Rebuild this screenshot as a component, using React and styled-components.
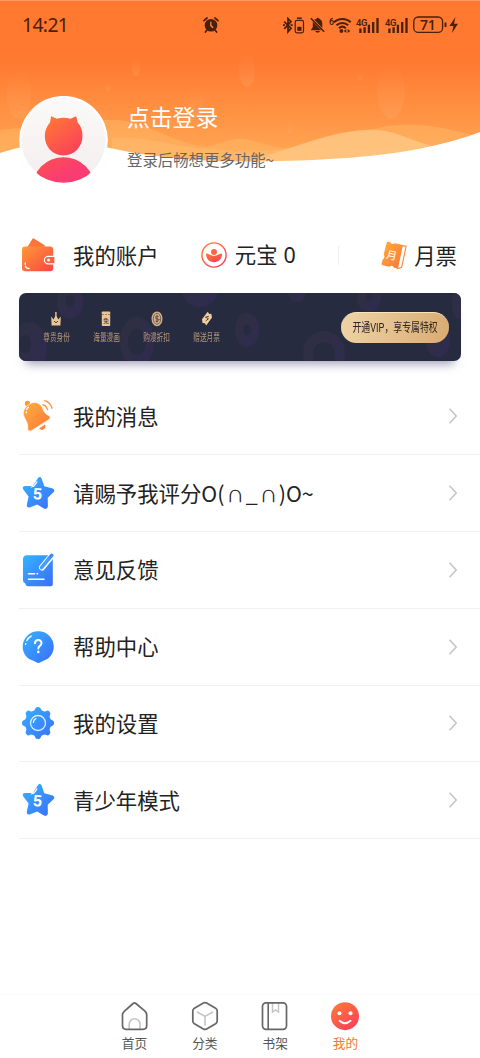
import styled, { createGlobalStyle } from "styled-components";

const GlobalStyle = createGlobalStyle`
  * {
    box-sizing: border-box;
  }
  body {
    margin: 0;
    background: #fff;
    font-family: "Noto Sans CJK SC", sans-serif;
    color: #222;
  }
`;

/* shared gradients, referenced by id from every icon */
function Gradients() {
  return (
    <HiddenSvg width="0" height="0">
      <defs>
        <linearGradient id="blue" x1="0" y1="0" x2="1" y2="1">
          <stop offset="0" stopColor="#35b4fd" />
          <stop offset="1" stopColor="#3b6dfb" />
        </linearGradient>
        <linearGradient id="orange" x1="0" y1="0" x2="1" y2="1">
          <stop offset="0" stopColor="#ffae3f" />
          <stop offset="1" stopColor="#fd7638" />
        </linearGradient>
        <linearGradient id="red" x1="0.1" y1="0" x2="0.8" y2="1">
          <stop offset="0" stopColor="#ff7a35" />
          <stop offset="1" stopColor="#fb3e5c" />
        </linearGradient>
        <linearGradient id="wallet" x1="0" y1="0" x2="1" y2="1">
          <stop offset="0" stopColor="#ff9a35" />
          <stop offset="1" stopColor="#fb4345" />
        </linearGradient>
      </defs>
    </HiddenSvg>
  );
}

function HeaderArt() {
  return (
    <HeaderSvg width="480" height="190" viewBox="0 0 480 190">
      <defs>
        <linearGradient id="sky" x1="0" y1="0" x2="0" y2="1">
          <stop offset="0" stopColor="#ff7830" />
          <stop offset="0.38" stopColor="#ff7a31" />
          <stop offset="1" stopColor="#ffab57" />
        </linearGradient>
        <linearGradient id="drop" x1="0" y1="0" x2="0" y2="1">
          <stop offset="0" stopColor="#ffb070" stopOpacity="0" />
          <stop offset="1" stopColor="#ffb070" stopOpacity="0.24" />
        </linearGradient>
      </defs>
      <rect width="480" height="165" fill="url(#sky)" />
      <rect width="480" height="1" fill="#ff9a62" />
      <g fill="url(#drop)">
        <ellipse cx="19" cy="94" rx="12" ry="25" />
        <ellipse cx="136" cy="68" rx="4" ry="8" />
        <ellipse cx="108" cy="87" rx="2.5" ry="4" />
        <ellipse cx="247" cy="70" rx="8" ry="17" />
        <ellipse cx="360" cy="77" rx="2.3" ry="4" />
        <ellipse cx="391" cy="91" rx="13.5" ry="28" />
        <ellipse cx="290" cy="127" rx="3" ry="7" />
        <ellipse cx="196" cy="103" rx="8" ry="15" />
      </g>
      <path
        d="M0 130C30 127 80 119 118 120C150 123 170 142 206 147C218 145 228 139 240 138.5C256 139 270 149 288 148C320 143 340 130 372 129.5C390 124 410 124 430 126C450 129 462 133 475 136V170H0Z"
        fill="#ffb765"
        opacity="0.5"
      />
      <path
        d="M258 158C300 146 330 131 368 130C392 128 410 141 436 147V170H258Z"
        fill="#ffc988"
        opacity="0.75"
      />
      <path
        d="M112 138C150 136 175 148 210 149C240 152 262 152 290 149V170H112Z"
        fill="#ffc47c"
        opacity="0.35"
      />
      <path
        d="M0 153C35 141 72 139 110 148C180 164 250 162 300 160.5C370 158 430 151 480 132V190H0Z"
        fill="#fff"
      />
    </HeaderSvg>
  );
}

function AlarmIcon() {
  return (
    <svg width="16" height="16" viewBox="0 0 16 16">
      <circle cx="8" cy="8.3" r="6.3" fill="#49200c" />
      <path
        d="M1 3.6 4 1M15 3.6 12 1M4 13 2.4 15M12 13l1.6 2"
        stroke="#49200c"
        strokeWidth="1.7"
        strokeLinecap="round"
      />
      <path d="M7.8 4.8v3.8l2.4 2.2" stroke="#ff8b4c" strokeWidth="1.3" fill="none" />
    </svg>
  );
}

function BluetoothIcon() {
  return (
    <svg width="23" height="17" viewBox="0 0 23 17" fill="none" stroke="#49200c">
      <path d="M1.2 4.7 8 11.3 5 14.8V1.5l3 3.2L1.2 11.8" strokeWidth="1.7" />
      <path d="M0 8.2h2M7.5 8.2h2.2" strokeWidth="1.8" />
      <rect x="12.2" y="3.4" width="8.3" height="12.4" rx="1.8" strokeWidth="1.2" />
      <path d="M14 1.2h4.8" strokeWidth="1.5" />
      <path d="M14.3 11.8h4.2" strokeWidth="4" />
    </svg>
  );
}

function BellOffIcon() {
  return (
    <svg width="15" height="16" viewBox="0 0 15 16" fill="#49200c">
      <path d="M4.3 2.6C5.8 1.9 6.9 1.9 7.2.8h1.2C8.7 1.9 12.3 2.3 12.3 6.4v4.6ZM2.8 4.7 11.3 13.2H.9c.3-1.3 1.9-1.5 1.9-3.6Z" />
      <path d="M5.3 14h4.6c-.5 2-4.1 2-4.6 0Z" />
      <path d="M.8 1.3 14.2 14.7" stroke="#49200c" strokeWidth="1.6" />
    </svg>
  );
}

function WifiIcon() {
  return (
    <svg width="23" height="17" viewBox="0 0 23 17">
      <TinyText x="0" y="8.3" fontSize="8.8">6</TinyText>
      <g fill="none" stroke="#49200c" strokeWidth="2">
        <path d="M5 5.3C9.5.8 17.2.8 21.7 5.3" />
        <path d="M7.5 8.3c3.3-3.2 8.4-3.2 11.7 0" />
        <path d="M10 11.2c2-1.8 4.8-1.8 6.7 0" />
      </g>
      <circle cx="12.4" cy="14" r="1.9" fill="#49200c" />
      <path d="M14.8 14l2.5-2v4ZM21.2 14l-2.5-2v4Z" fill="#49200c" />
    </svg>
  );
}

function SignalIcon() {
  return (
    <svg width="24.5" height="17" viewBox="0 0 24.5 17">
      <TinyText x="0" y="9" fontSize="9.4">4G</TinyText>
      <path
        d="M4.4 11.5v4.5M8.6 10.2v5.8M12.9 7.8v8.2M17.2 5v11M21.5 1v15"
        stroke="#49200c"
        strokeWidth="2.3"
      />
    </svg>
  );
}

function BatteryIcon() {
  return (
    <svg width="46" height="18" viewBox="0 0 46 18">
      <rect x=".8" y="1" width="28.8" height="15.4" rx="4.5" fill="none" stroke="#49200c" strokeWidth="1.3" />
      <path d="M32.5 6.5v4.5" stroke="#49200c" strokeWidth="1.9" />
      <BatteryText x="7" y="13.6">71</BatteryText>
      <path d="M42.5 1 36.4 10h4l-1.4 7 6-9.3h-4Z" fill="#49200c" />
    </svg>
  );
}

function Avatar() {
  return (
    <svg width="90" height="88" viewBox="0 0 90 88">
      <defs>
        <linearGradient id="face" x1="0" y1="0" x2="0" y2="1">
          <stop offset="0" stopColor="#fbf9f9" />
          <stop offset="1" stopColor="#f4eeed" />
        </linearGradient>
        <linearGradient id="body" x1="0" y1="0" x2=".5" y2="1">
          <stop offset="0" stopColor="#ff5349" />
          <stop offset=".45" stopColor="#f93c72" />
        </linearGradient>
        <clipPath id="round">
          <circle cx="44.5" cy="44" r="42.7" />
        </clipPath>
      </defs>
      <circle cx="44.5" cy="44.2" r="44.3" fill="#fff" />
      <circle cx="44.5" cy="44" r="42.2" fill="url(#face)" />
      <path
        d="M32 20.8C32 20.2 32.7 20.2 33.3 20.7L38 22.8Q44.5 20.5 51.5 22.8L56.5 20.5C57.2 20.2 57.4 20.7 57.5 21.3L58.7 26.5C62 30 63.5 34.5 63.5 40C63.5 51 55 59.5 44.5 59.5S25.8 51 25.8 40C25.8 34.5 28 30 31 26.5Z"
        fill="url(#red)"
      />
      <circle cx="44.5" cy="92.5" r="31.3" fill="url(#body)" clipPath="url(#round)" />
    </svg>
  );
}

function WalletIcon() {
  return (
    <svg width="34" height="34" viewBox="0 0 34 34">
      <path d="M5.5 9 10.5.8Q11.2 0 12.2.7L22.7 7.2V9Z" fill="#fd7438" />
      <rect x="0" y="8.5" width="31.2" height="24.8" rx="3.2" fill="url(#wallet)" />
      <path
        d="M33 18.3h-6.8a3.8 3.8 0 0 0 0 7.6H33Z"
        fill="#fc6042"
        stroke="#fff"
        strokeWidth="1.2"
      />
      <circle cx="26.5" cy="22.1" r="1.5" fill="#fff" />
      <path d="M3.2 25v1.3M3.4 28.2c.5 1.5 1.6 2.3 3.7 2.3" stroke="#fff" strokeWidth="1.3" fill="none" strokeLinecap="round" />
    </svg>
  );
}

function CoinIcon() {
  return (
    <svg width="26" height="26" viewBox="0 0 26 26">
      <circle cx="13" cy="13" r="12.1" fill="none" stroke="url(#red)" strokeWidth="1.4" />
      <circle cx="13" cy="10" r="3" fill="#fd6545" />
      <path
        d="M5 11.5c3.5-.2 4.7 2.5 8 2.5s4.5-2.7 8-2.5c.3 5.2-3.3 8.8-8 8.8s-8.3-3.6-8-8.8Z"
        fill="url(#red)"
      />
    </svg>
  );
}

function TicketIcon() {
  return (
    <svg width="26" height="29" viewBox="0 0 26 29">
      <path d="M20.5 4.6l4.6.7-4.5 21.3-4.8 1" fill="#fff" stroke="#ff8437" strokeWidth="1.1" />
      <path
        d="M5.5 2.2Q6 .5 7.7.8L9.5 1.2Q11 4.2 14 2.3L20.8 3.8Q22 4 21.7 5.2L17.3 26.2Q17 27.5 15.5 27.2L13 26.7Q11.5 23.5 8.5 25.7L1.5 24.2Q.3 24 .6 22.6L1.7 18.5Q4.5 16.5 2.7 13.5Z"
        fill="url(#orange)"
      />
      <text x="5.6" y="18.2" fontSize="10.5" fill="#fff" transform="rotate(12 11 14)">月</text>
    </svg>
  );
}

function BellIcon() {
  return (
    <svg width="34" height="34" viewBox="0 0 34 34">
      <circle cx="6.5" cy="4.5" r="2.7" fill="#ff9a3b" />
      <path d="M18 29.5 24 25.5c2 3.2-2.5 7.5-6 4Z" fill="#fd8438" />
      <path
        d="M9.2 4.7C14 1.8 19.5 4.3 21.6 9.2C22.9 12.7 24.5 15 27.5 16.6C29.6 17.8 29.4 19.3 27.9 20.6L10.8 31.4C8.3 32.7 6.6 31.7 6.8 29.4C7.2 24.5 5 22 3 17.5C1 12.7 3.7 7.5 9.2 4.7Z"
        fill="url(#orange)"
        stroke="#fff"
        strokeWidth=".6"
      />
      <path d="M22 5.6q3 .9 4.6 5M23.7 1.6q5.5 1.3 7.3 7.6" stroke="#ff9440" strokeWidth="1.4" fill="none" strokeLinecap="round" />
      <path d="M5.3 13.8v-1M5.7 10.5q.6-1.5 1.7-2.2" stroke="#fff" strokeWidth="1.3" fill="none" strokeLinecap="round" />
    </svg>
  );
}

function StarIcon() {
  return (
    <svg width="34" height="34" viewBox="0 0 34 34">
      <path
        d="M17 1.9Q19 -.3 20.5 2.3L23.3 10.3L31.7 12.5Q34.8 14 32.2 16.5L26.7 21.8L26.9 30.2Q26.3 33.9 23 32.5L16.2 28.5L8.7 31.5Q5.5 32.1 5.8 28.7L7.6 20.6L2.3 13.5Q.6 10.4 4 10.1L12 9.9Z"
        fill="url(#blue)"
      />
      <path d="M10.2 11q3-.2 4-2.4l1.7-2.8" stroke="#fff" strokeWidth="1.2" fill="none" strokeLinecap="round" />
      <IconText x="12.3" y="23.3" fontSize="16" transform="rotate(4 16 17)">5</IconText>
    </svg>
  );
}

function FeedbackIcon() {
  return (
    <svg width="34" height="34" viewBox="0 0 34 34">
      <path
        d="M6 2.3H30Q31.8 2.3 31.8 4.1V31.4Q31.8 33.2 30 33.2H6.7Q4.7 33 4.2 30.5Q2 30 2 27.3V6.3Q2 2.3 6 2.3Z"
        fill="url(#blue)"
      />
      <path d="M30.5 3 21 14.5" stroke="#fff" strokeWidth="6" strokeLinecap="round" />
      <path d="M30.7 2.3 27.5 6.2" stroke="#3f8afb" strokeWidth="3.6" strokeLinecap="round" />
      <path d="M27.5 6.2 20.5 14.7" stroke="#479dfc" strokeWidth="3.6" strokeLinecap="round" />
      <path d="M7.5 20.7h6M16 20.7h.6M7.5 26.2H23" stroke="#fff" strokeWidth="1.5" strokeLinecap="round" />
    </svg>
  );
}

function HelpIcon() {
  return (
    <svg width="34" height="34" viewBox="0 0 34 34">
      <path
        d="M17.2 1.3A15.3 15.3 0 0 1 32.7 16.7C32.7 23.5 28.7 28.5 22.5 30.8L18.4 32.7Q17.4 33.1 16.4 32.7L12.2 30.8C5.7 28.5 1.7 23.5 1.7 16.7A15.4 15.4 0 0 1 17.2 1.3Z"
        fill="url(#blue)"
      />
      <path d="M4.6 14.4l.1-.6M5.9 10.5q1.3-2.8 4.2-4.4" stroke="#fff" strokeWidth="1.4" fill="none" strokeLinecap="round" />
      <path
        d="M14 13.3c.2-4.3 6.7-4.2 6.5-.1-.2 2.8-3.2 2.6-3.2 5.4"
        stroke="#fff"
        strokeWidth="2"
        fill="none"
        strokeLinecap="round"
      />
      <circle cx="17.3" cy="21.9" r="1.3" fill="#fff" />
    </svg>
  );
}

function SettingsIcon() {
  const teeth = [0, 45, 90, 135, 180, 225, 270, 315];
  return (
    <svg width="34" height="34" viewBox="0 0 34 34">
      <mask id="gear">
        <circle cx="17" cy="17" r="13" fill="#fff" />
        {teeth.map((angle) => (
          <path
            key={angle}
            d="M11.5 6Q13.8 4.8 14.3 2.6 14.7.9 17 .9T19.7 2.6Q20.2 4.8 22.5 6Z"
            fill="#fff"
            transform={`rotate(${angle} 17 17)`}
          />
        ))}
      </mask>
      <rect width="34" height="34" fill="url(#blue)" mask="url(#gear)" />
      <circle cx="17" cy="17" r="7.5" fill="none" stroke="#d5edff" strokeWidth="1.3" />
      <path d="M12.3 16.5q.3-2.6 2.6-3.9" stroke="#fff" strokeWidth="1.2" fill="none" strokeLinecap="round" />
    </svg>
  );
}

function Chevron() {
  return (
    <svg width="10" height="18" viewBox="0 0 10 18" fill="none">
      <path d="M1.5 1.7 8.2 9 1.5 16.3" stroke="#c6c6c6" strokeWidth="1.6" />
    </svg>
  );
}

function CardArt() {
  return (
    <CardSvg width="442" height="68" viewBox="0 0 442 68">
      <defs>
        <linearGradient id="ring" x1="0" y1="0" x2="1" y2="1">
          <stop offset="0" stopColor="#2e303e" />
          <stop offset="1" stopColor="#302a52" />
        </linearGradient>
      </defs>
      <g fill="url(#ring)">
        <ellipse cx="51" cy="8" rx="13" ry="18" />
        <ellipse cx="10" cy="54" rx="18" ry="25" />
        <ellipse cx="118" cy="49" rx="17" ry="25" />
        <ellipse cx="181" cy="-4" rx="18" ry="18" />
        <ellipse cx="228" cy="37" rx="12" ry="17" />
        <ellipse cx="278" cy="-3" rx="9" ry="12" />
        <ellipse cx="350" cy="4" rx="12" ry="15" />
        <ellipse cx="305" cy="60" rx="21" ry="22" />
        <ellipse cx="419" cy="48" rx="12" ry="16" />
        <ellipse cx="440" cy="10" rx="7" ry="16" />
      </g>
      <g fill="#272b3f">
        <ellipse cx="51" cy="8" rx="4.5" ry="6" />
        <ellipse cx="6" cy="51" rx="6" ry="9" />
        <ellipse cx="118" cy="49" rx="9" ry="13" />
        <ellipse cx="228" cy="37" rx="3.5" ry="5" />
        <ellipse cx="350" cy="3" rx="3.5" ry="5" />
        <ellipse cx="305" cy="62" rx="11" ry="13" />
      </g>
    </CardSvg>
  );
}

function CrownIcon() {
  return (
    <svg width="12" height="16" viewBox="0 0 12 16">
      <path d="M1.2 5.5 3.6 8.5 5.2 5V1h1.4V5L8.3 8.5 10.8 5.5 10.4 14.5H1.6Z" fill="#eac596" />
      <path d="M4 10.2q2 3 4 0" stroke="#4c4144" fill="none" />
    </svg>
  );
}

function ComicIcon() {
  return (
    <svg width="10" height="16" viewBox="0 0 10 16">
      <rect x=".8" y=".5" width="8.4" height="14.5" rx=".7" fill="#eac596" />
      <path d="M1.5 3.5h1M4.5 3.5h1M7.5 3.5h1" stroke="#4c4144" />
      <text x="2" y="11.8" fontSize="6" fontWeight="500" fill="#4c4144">免</text>
    </svg>
  );
}

function DiscountIcon() {
  return (
    <svg width="12" height="16" viewBox="0 0 12 16">
      <ellipse cx="6" cy="7.8" rx="5.5" ry="7.4" fill="#d6b189" />
      <ellipse cx="6" cy="7.8" rx="3.7" ry="5.5" fill="none" stroke="#574a48" strokeWidth=".8" />
      <path d="M7.5 5.5Q4.3 4.5 4.5 6.5T7.3 8.2 6 10.6L4.5 10M6 4v7.5" stroke="#574a48" fill="none" />
    </svg>
  );
}

function GiftIcon() {
  return (
    <svg width="12" height="16" viewBox="0 0 12 16">
      <path d="M6.7.7 8.3 3l2-.2L11 6.5 5.2 14.6 3.9 12.2 1.5 12 1 8.2Z" fill="#f1ce9c" />
      <path d="M7.8 5.3 4.5 6.2l3 1.5-2.8 2.3" stroke="#4c4144" fill="none" />
    </svg>
  );
}

function HomeIcon() {
  return (
    <svg width="28" height="30" viewBox="0 0 28 30" fill="none" strokeLinejoin="round">
      <path d="M8.2 28v-4.8a5.4 5.4 0 0 1 10.8 0V28" stroke="#c5c5c5" strokeWidth="1.6" />
      <path d="M3.5 10.2 12.1 2.5Q13.5 1.4 14.9 2.5L24 10.2Q25.7 12 25.7 14V24.5Q25.7 28.3 22 28.3H5.2Q1.5 28.3 1.5 24.5V14Q1.5 12 3.5 10.2Z" stroke="#666" strokeWidth="1.7" />
    </svg>
  );
}

function CategoryIcon() {
  return (
    <svg width="28" height="30" viewBox="0 0 28 30" fill="none" strokeLinejoin="round">
      <path d="M6.5 11.2 14 15.4 21.5 11.2M14 15.4V24" stroke="#c5c5c5" strokeWidth="1.6" strokeLinecap="round" />
      <path d="M12.4 2.1Q14 1.2 15.6 2.1L24.6 7.3Q26.2 8.3 26.2 10V20Q26.2 21.7 24.6 22.7L15.6 27.9Q14 28.8 12.4 27.9L3.4 22.7Q1.8 21.7 1.8 20V10Q1.8 8.3 3.4 7.3Z" stroke="#666" strokeWidth="1.7" />
    </svg>
  );
}

function ShelfIcon() {
  return (
    <svg width="28" height="30" viewBox="0 0 28 30" fill="none">
      <path d="M11.5 2v9l3-2 3 2V2" stroke="#c5c5c5" strokeWidth="1.5" />
      <rect x="1.5" y="1.8" width="24" height="26.5" rx="3.5" stroke="#666" strokeWidth="1.7" />
      <path d="M7.2 2v26" stroke="#666" strokeWidth="1.6" />
    </svg>
  );
}

function SmileIcon() {
  return (
    <svg width="30" height="30" viewBox="0 0 30 30">
      <circle cx="15" cy="15.2" r="14" fill="url(#red)" />
      <circle cx="9.5" cy="12.2" r="2" fill="#fff" />
      <circle cx="20.5" cy="12.2" r="2" fill="#fff" />
      <path d="M9.5 19.8q5.4 4.8 11 0" stroke="#fff" strokeWidth="1.9" fill="none" strokeLinecap="round" />
    </svg>
  );
}

function HappyFace() {
  return (
    <>
      O(<Cap>∩</Cap>_<Cap>∩</Cap>)O~
    </>
  );
}

const perks = [
  { label: "尊贵身份", icon: <CrownIcon /> },
  { label: "海量漫画", icon: <ComicIcon /> },
  { label: "购漫折扣", icon: <DiscountIcon /> },
  { label: "赠送月票", icon: <GiftIcon /> },
];

const menu = [
  { label: "我的消息", icon: <BellIcon /> },
  { label: "请赐予我评分", icon: <StarIcon />, suffix: <HappyFace /> },
  { label: "意见反馈", icon: <FeedbackIcon /> },
  { label: "帮助中心", icon: <HelpIcon /> },
  { label: "我的设置", icon: <SettingsIcon /> },
  { label: "青少年模式", icon: <StarIcon /> },
];

const tabs = [
  { label: "首页", icon: <HomeIcon /> },
  { label: "分类", icon: <CategoryIcon /> },
  { label: "书架", icon: <ShelfIcon /> },
  { label: "我的", icon: <SmileIcon />, active: true },
];

function App() {
  return (
    <Page>
      <GlobalStyle />
      <Gradients />
      <Header>
        <HeaderArt />
        <StatusBar>
          <Time>14:21</Time>
          <AlarmIcon />
          <StatusIcons>
            <BluetoothIcon />
            <BellOffIcon />
            <WifiIcon />
            <SignalIcon />
            <SignalIcon />
            <BatteryIcon />
          </StatusIcons>
        </StatusBar>
        <Profile>
          <Avatar />
          <ProfileText>
            <LoginTitle>点击登录</LoginTitle>
            <LoginHint>登录后畅想更多功能~</LoginHint>
          </ProfileText>
        </Profile>
      </Header>

      <AccountRow>
        <AccountItem $gap={17}>
          <WalletIcon />
          <AccountLabel>我的账户</AccountLabel>
        </AccountItem>
        <AccountItem $gap={8}>
          <CoinIcon />
          <AccountLabel>
            元宝 <Amount>0</Amount>
          </AccountLabel>
        </AccountItem>
        <Separator />
        <AccountItem $gap={7}>
          <TicketIcon />
          <AccountLabel>月票</AccountLabel>
        </AccountItem>
      </AccountRow>

      <VipCard>
        <CardArt />
        <Perks>
          {perks.map((perk) => (
            <Perk key={perk.label}>
              {perk.icon}
              <PerkLabel>{perk.label}</PerkLabel>
            </Perk>
          ))}
        </Perks>
        <VipButton>
          <VipButtonText>
            开通<Latin>VIP</Latin>，享专属特权
          </VipButtonText>
        </VipButton>
      </VipCard>

      <Menu>
        {menu.map((item) => (
          <MenuRow key={item.label}>
            {item.icon}
            <MenuLabel>
              {item.label}
              {item.suffix}
            </MenuLabel>
            <Chevron />
          </MenuRow>
        ))}
      </Menu>

      <TabBar>
        {tabs.map((tab) => (
          <Tab key={tab.label} $active={tab.active}>
            {tab.icon}
            <TabLabel>{tab.label}</TabLabel>
          </Tab>
        ))}
      </TabBar>
    </Page>
  );
}

const HiddenSvg = styled.svg`
  position: absolute;
`;

const Page = styled.div`
  width: 480px;
  height: 1058px;
  display: flex;
  flex-direction: column;
  overflow: hidden;
  svg {
    flex: none;
  }
`;

const Header = styled.header`
  position: relative;
  height: 217px;
`;

const HeaderSvg = styled.svg`
  position: absolute;
  top: 0;
  left: 0;
  z-index: -1;
`;

const StatusBar = styled.div`
  height: 50px;
  display: grid;
  grid-template-columns: 181px 80px 1fr;
  align-items: center;
  padding-left: 22px;
`;

const Time = styled.span`
  font-family: "Noto Sans", sans-serif;
  font-size: 19.3px;
  letter-spacing: -0.6px;
  line-height: 24px;
  color: #49200c;
`;

const StatusIcons = styled.div`
  display: flex;
  align-items: center;
  gap: 4px;
`;

const TinyText = styled.text`
  font-family: Roboto, sans-serif;
  font-weight: 600;
  letter-spacing: -0.4px;
  fill: #49200c;
`;

const BatteryText = styled.text`
  font-family: "Open Sans", sans-serif;
  font-size: 14px;
  font-weight: 600;
  letter-spacing: -0.3px;
  fill: #49200c;
`;

const IconText = styled.text`
  font-family: "Liberation Sans", sans-serif;
  font-weight: 700;
  fill: #fff;
`;

const Profile = styled.div`
  display: flex;
  gap: 18px;
  padding: 46px 0 0 19px;
`;

const ProfileText = styled.div`
  padding-top: 5px;
`;

const LoginTitle = styled.div`
  font-size: 22.8px;
  line-height: 32px;
  color: #fff;
`;

const LoginHint = styled.div`
  margin-top: 15px;
  font-size: 15.4px;
  line-height: 22px;
  color: #666;
`;

const AccountRow = styled.div`
  height: 76px;
  display: flex;
  align-items: center;
  justify-content: space-between;
  padding: 0 23px 0 22px;
`;

const AccountItem = styled.div`
  display: flex;
  align-items: center;
  gap: ${(props) => props.$gap}px;
`;

const AccountLabel = styled.span`
  padding-bottom: 1px;
  font-size: 21.4px;
  line-height: 30px;
`;

const Amount = styled.span`
  margin-left: 1px;
  font-family: "Noto Sans", sans-serif;
`;

const Separator = styled.div`
  width: 1px;
  height: 19px;
  background: #f0f0f0;
`;

const VipCard = styled.section`
  position: relative;
  width: 442px;
  height: 68px;
  margin-left: 19px;
  display: flex;
  align-items: center;
  justify-content: space-between;
  padding: 0 12px;
  border-radius: 7px;
  background: #272b3f;
  box-shadow: 0 10px 9px -7px rgba(70, 66, 120, 0.5);
`;

const CardSvg = styled.svg`
  position: absolute;
  top: 0;
  left: 0;
  border-radius: 7px;
`;

const Perks = styled.div`
  position: relative;
  display: flex;
`;

const Perk = styled.div`
  width: 50.3px;
  display: flex;
  flex-direction: column;
  align-items: center;
`;

const PerkLabel = styled.span`
  margin-top: 3px;
  font-size: 9.8px;
  line-height: 14px;
  white-space: nowrap;
  color: #b8977b;
  transform: scaleX(0.68);
`;

const VipButton = styled.div`
  position: relative;
  width: 108px;
  height: 31px;
  display: flex;
  align-items: center;
  justify-content: center;
  border-radius: 16px;
  background: linear-gradient(100deg, #efd3a6, #d9ac70);
  border-top: 1px solid #f7e3bf;
`;

const VipButtonText = styled.span`
  flex: none;
  font-size: 12.5px;
  line-height: 20px;
  color: #2c2622;
  white-space: nowrap;
  transform: scaleX(0.71);
`;

const Latin = styled.span`
  font-family: Roboto, sans-serif;
  font-size: 13px;
`;

const Menu = styled.div`
  margin-top: 17.4px;
`;

const MenuRow = styled.div`
  height: 76.8px;
  margin-left: 19px;
  display: flex;
  align-items: center;
  padding: 0 22px 0 2px;
  border-bottom: 1px solid #f0f0f0;
`;

const MenuLabel = styled.span`
  flex: 1;
  margin-left: 18px;
  padding-bottom: 1px;
  font-size: 21.4px;
  line-height: 30px;
`;

const Cap = styled.span`
  margin: 0 1.6px;
  font-family: "DejaVu Sans", sans-serif;
  font-size: 25px;
  font-weight: 200;
  line-height: 1;
`;

const TabBar = styled.nav`
  margin-top: auto;
  height: 64px;
  display: flex;
  justify-content: center;
  padding-top: 6px;
  border-top: 1px solid #fafafa;
`;

const Tab = styled.div`
  width: 70.3px;
  display: flex;
  flex-direction: column;
  align-items: center;
  color: ${(props) => (props.$active ? "#f27a30" : "#555")};
`;

const TabLabel = styled.span`
  margin-top: 3px;
  font-size: 12.7px;
  line-height: 18px;
`;

export default App;
